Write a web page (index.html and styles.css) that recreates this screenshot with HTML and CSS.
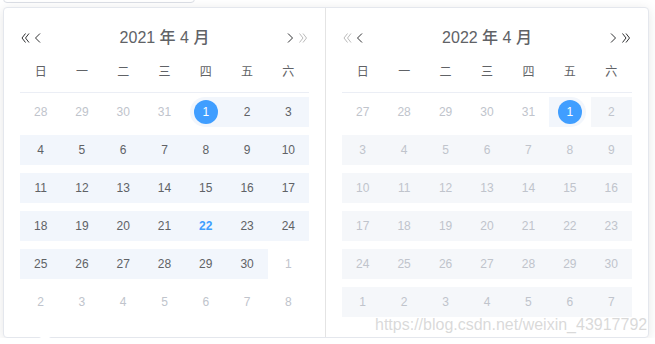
FILE: index.html
```html
<!DOCTYPE html>
<html lang="zh-CN">
<head>
  <meta charset="UTF-8">
  <title>日期范围选择</title>
  <link rel="stylesheet" href="styles.css">
</head>
<body>
  <div class="input"></div>

  <div class="picker">
    <div class="panel is-left">
      <div class="header">
        <div class="btns">
          <svg class="icon" viewBox="0 0 12 12"><path d="M5.5 1.5L2 6l3.5 4.5M9 1.5L5.5 6 9 10.5"/></svg>
          <svg class="icon" viewBox="0 0 12 12"><path d="M8 1.5L3.5 6 8 10.5"/></svg>
        </div>
        <div class="title">2021 年 4 月</div>
        <div class="btns">
          <svg class="icon" viewBox="0 0 12 12"><path d="M3 1.5L7.5 6 3 10.5"/></svg>
          <svg class="icon disabled" viewBox="0 0 12 12"><path d="M2.5 1.5L6 6l-3.5 4.5M6 1.5L9.5 6 6 10.5"/></svg>
        </div>
      </div>
      <div class="week">
        <span>日</span><span>一</span><span>二</span><span>三</span><span>四</span><span>五</span><span>六</span>
      </div>
      <div class="days">
        <div class="day prev"><span>28</span></div>
        <div class="day prev"><span>29</span></div>
        <div class="day prev"><span>30</span></div>
        <div class="day prev"><span>31</span></div>
        <div class="day range start"><span>1</span></div>
        <div class="day range"><span>2</span></div>
        <div class="day range"><span>3</span></div>

        <div class="day range"><span>4</span></div>
        <div class="day range"><span>5</span></div>
        <div class="day range"><span>6</span></div>
        <div class="day range"><span>7</span></div>
        <div class="day range"><span>8</span></div>
        <div class="day range"><span>9</span></div>
        <div class="day range"><span>10</span></div>

        <div class="day range"><span>11</span></div>
        <div class="day range"><span>12</span></div>
        <div class="day range"><span>13</span></div>
        <div class="day range"><span>14</span></div>
        <div class="day range"><span>15</span></div>
        <div class="day range"><span>16</span></div>
        <div class="day range"><span>17</span></div>

        <div class="day range"><span>18</span></div>
        <div class="day range"><span>19</span></div>
        <div class="day range"><span>20</span></div>
        <div class="day range"><span>21</span></div>
        <div class="day range today"><span>22</span></div>
        <div class="day range"><span>23</span></div>
        <div class="day range"><span>24</span></div>

        <div class="day range"><span>25</span></div>
        <div class="day range"><span>26</span></div>
        <div class="day range"><span>27</span></div>
        <div class="day range"><span>28</span></div>
        <div class="day range"><span>29</span></div>
        <div class="day range"><span>30</span></div>
        <div class="day prev"><span>1</span></div>

        <div class="day prev"><span>2</span></div>
        <div class="day prev"><span>3</span></div>
        <div class="day prev"><span>4</span></div>
        <div class="day prev"><span>5</span></div>
        <div class="day prev"><span>6</span></div>
        <div class="day prev"><span>7</span></div>
        <div class="day prev"><span>8</span></div>
      </div>
    </div>

    <div class="panel is-right">
      <div class="header">
        <div class="btns">
          <svg class="icon disabled" viewBox="0 0 12 12"><path d="M5.5 1.5L2 6l3.5 4.5M9 1.5L5.5 6 9 10.5"/></svg>
          <svg class="icon" viewBox="0 0 12 12"><path d="M8 1.5L3.5 6 8 10.5"/></svg>
        </div>
        <div class="title">2022 年 4 月</div>
        <div class="btns">
          <svg class="icon" viewBox="0 0 12 12"><path d="M3 1.5L7.5 6 3 10.5"/></svg>
          <svg class="icon" viewBox="0 0 12 12"><path d="M2.5 1.5L6 6l-3.5 4.5M6 1.5L9.5 6 6 10.5"/></svg>
        </div>
      </div>
      <div class="week">
        <span>日</span><span>一</span><span>二</span><span>三</span><span>四</span><span>五</span><span>六</span>
      </div>
      <div class="days">
        <div class="day prev"><span>27</span></div>
        <div class="day prev"><span>28</span></div>
        <div class="day prev"><span>29</span></div>
        <div class="day prev"><span>30</span></div>
        <div class="day prev"><span>31</span></div>
        <div class="day range end"><span>1</span></div>
        <div class="day off"><span>2</span></div>

        <div class="day off"><span>3</span></div>
        <div class="day off"><span>4</span></div>
        <div class="day off"><span>5</span></div>
        <div class="day off"><span>6</span></div>
        <div class="day off"><span>7</span></div>
        <div class="day off"><span>8</span></div>
        <div class="day off"><span>9</span></div>

        <div class="day off"><span>10</span></div>
        <div class="day off"><span>11</span></div>
        <div class="day off"><span>12</span></div>
        <div class="day off"><span>13</span></div>
        <div class="day off"><span>14</span></div>
        <div class="day off"><span>15</span></div>
        <div class="day off"><span>16</span></div>

        <div class="day off"><span>17</span></div>
        <div class="day off"><span>18</span></div>
        <div class="day off"><span>19</span></div>
        <div class="day off"><span>20</span></div>
        <div class="day off"><span>21</span></div>
        <div class="day off"><span>22</span></div>
        <div class="day off"><span>23</span></div>

        <div class="day off"><span>24</span></div>
        <div class="day off"><span>25</span></div>
        <div class="day off"><span>26</span></div>
        <div class="day off"><span>27</span></div>
        <div class="day off"><span>28</span></div>
        <div class="day off"><span>29</span></div>
        <div class="day off"><span>30</span></div>

        <div class="day off"><span>1</span></div>
        <div class="day off"><span>2</span></div>
        <div class="day off"><span>3</span></div>
        <div class="day off"><span>4</span></div>
        <div class="day off"><span>5</span></div>
        <div class="day off"><span>6</span></div>
        <div class="day off"><span>7</span></div>
      </div>
    </div>

    <div class="arrow"></div>
  </div>

  <div class="watermark">https://blog.csdn.net/weixin_43917792</div>
</body>
</html>
```

FILE: styles.css
```css
body {
  margin: 0;
  background: #fff;
  font-family: "Liberation Sans", Arial, "Noto Sans CJK SC", sans-serif;
  color: #606266;
}
.input {
  width: 192px;
  height: 40px;
  margin: -37px 0 0 3px;
  box-sizing: border-box;
  border: 1px solid #dcdfe6;
  border-radius: 4px;
}
.picker {
  position: relative;
  display: flex;
  width: 644px;
  margin: 4px 0 0 3px;
  background: #fff;
  border: 1px solid #e4e7ed;
  border-radius: 4px;
  box-shadow: 0 2px 12px 0 rgba(0,0,0,0.1);
}
.panel {
  width: 50%;
  box-sizing: border-box;
  padding: 16px;
}
.panel.is-left {
  border-right: 1px solid #e4e4e4;
}
.header {
  display: grid;
  grid-template-columns: 24px 1fr 24px;
  align-items: center;
  height: 28px;
}
.btns {
  display: flex;
}
.icon {
  width: 12px;
  height: 12px;
  fill: none;
  stroke: #303133;
  stroke-width: 1;
}
.icon.disabled {
  stroke: #bbb;
}
.title {
  text-align: center;
  font-size: 16px;
  font-weight: 500;
  line-height: 28px;
}
.week {
  display: grid;
  grid-template-columns: repeat(7, 1fr);
  border-bottom: 1px solid #ebeef5;
  font-size: 12px;
  line-height: 30px;
  text-align: center;
}
.week span {
  padding: 5px 0;
}
.days {
  display: grid;
  grid-template-columns: repeat(7, 1fr);
  font-size: 12px;
}
.day {
  display: grid;
  padding: 4px 0;
}
.day::before {
  content: "";
  grid-area: 1 / 1;
  height: 30px;
}
.day span {
  grid-area: 1 / 1;
  place-self: center;
  width: 24px;
  height: 24px;
  line-height: 24px;
  text-align: center;
  border-radius: 50%;
}
.day.prev {
  color: #c0c4cc;
}
.day.range::before {
  background: #f2f6fc;
}
.day.off {
  color: #c0c4cc;
}
.day.off::before {
  background: #f5f7fa;
}
.day.today span {
  color: #409eff;
  font-weight: 700;
}
.day.start::before {
  margin-left: 5px;
  border-radius: 15px 0 0 15px;
}
.day.end::before {
  margin-right: 5px;
  border-radius: 0 15px 15px 0;
}
.day.start span,
.day.end span {
  background: #409eff;
  color: #fff;
}
.arrow {
  position: absolute;
  left: 35px;
  bottom: -6px;
  border: 6px solid transparent;
  border-top-color: #ebeef5;
  border-bottom-width: 0;
}
.arrow::after {
  content: "";
  position: absolute;
  left: -6px;
  bottom: 1px;
  border: 6px solid transparent;
  border-top-color: #fff;
  border-bottom-width: 0;
}
.watermark {
  position: absolute;
  left: 375px;
  top: 317px;
  font-size: 16px;
  line-height: 16px;
  color: rgba(180,180,180,0.5);
  white-space: nowrap;
}
```
